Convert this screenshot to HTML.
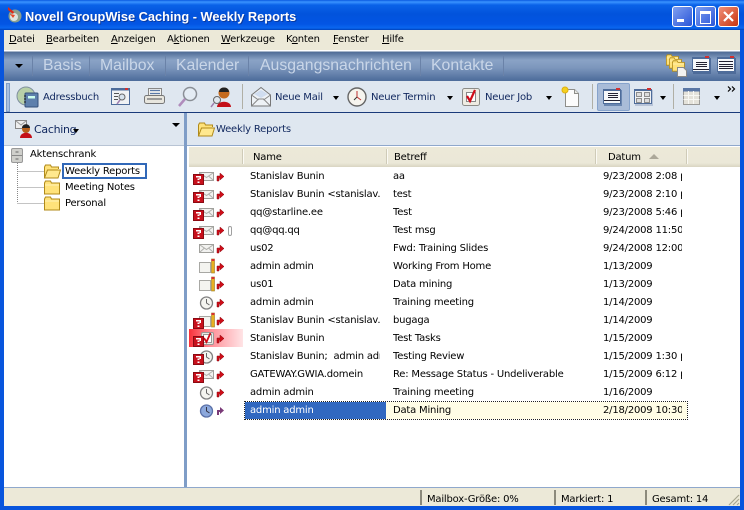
<!DOCTYPE html>
<html><head><meta charset="utf-8">
<style>
html,body{margin:0;padding:0;width:744px;height:510px;overflow:hidden;background:#0855DD}
body{position:relative;font-family:"DejaVu Sans","Liberation Sans",sans-serif;font-size:10px;color:#000;letter-spacing:-.2px}
.a{position:absolute}
.t{position:absolute;white-space:nowrap;line-height:14px}
.m{position:absolute;top:33px;white-space:nowrap;font-size:10px;line-height:14px}
.m u{text-decoration:underline}
.n{position:absolute;top:56px;font-family:"Liberation Sans",sans-serif;font-size:15.800px;line-height:20px;color:#C9D6E8;white-space:nowrap;letter-spacing:0}
.s{position:absolute;width:1px;background:#6A82A8}
.b{position:absolute;top:91px;color:#10275E;white-space:nowrap;line-height:14px;font-size:10px}
.dd{position:absolute;width:0;height:0;border-left:3.5px solid transparent;border-right:3.5px solid transparent;border-top:4px solid #000}
.c{position:absolute;white-space:nowrap;overflow:hidden;line-height:14px;height:15px;font-size:10px}
.n1{left:250px;width:130px}.n2{left:393px;width:198px}.n3{left:603px;width:79px}
svg{position:absolute;overflow:visible}
</style></head><body>
<svg width="0" height="0" style="position:absolute"><defs>
<g id="q"><rect x=".5" y=".5" width="10" height="10" fill="#C8101C" stroke="#8A0A12"/><rect x="3" y="2" width="5" height="1.500" fill="#fff"/><rect x="6.500" y="2" width="1.500" height="3" fill="#fff"/><rect x="4.500" y="4.500" width="2" height="1.500" fill="#fff"/><rect x="4.500" y="7.500" width="2" height="1.500" fill="#fff"/></g>
<g id="env"><rect x=".5" y=".5" width="14" height="8" fill="#F2F2F0" stroke="#A0A09C"/><path d="M1 1l6.500 4.500L14 1M1 8l4.500-4M14 8L9.500 4" fill="none" stroke="#B0B0AC"/></g>
<path id="ar" d="M1 9V4h3V1l4 3.500-4 3.500V6H3v3z" fill="#D00C18" stroke="#8A0A12" stroke-width=".5"/>
<g id="clk"><circle cx="7" cy="7" r="6" fill="#F4F4F0" stroke="#808080" stroke-width="1.300"/><path d="M7 3v4l3 2" fill="none" stroke="#666"/></g>
<g id="box"><rect x=".5" y="3.500" width="11" height="10" fill="#F4F4F0" stroke="#A8A8A4"/><rect x="12.500" y="0" width="3" height="14" fill="#E8B020" stroke="#9A7A20" stroke-width=".6"/><rect x="12.500" y="0" width="3" height="2" fill="#D83030"/></g>
<g id="fold"><path d="M.5 14V3l1-2h5l1 2h8v11z" fill="#FFE27A" stroke="#B08A1A"/><path d="M1 5h14" stroke="#FFF3B8"/></g>
<g id="foldo"><path d="M.5 14V3l1-2h5l1 2h7v2" fill="#FFE27A" stroke="#B08A1A"/><path d="M.5 14l3-8h13l-2.500 8z" fill="#FFE88E" stroke="#B08A1A"/></g>
</defs></svg>

<!-- titlebar -->
<div class="a" style="left:0;top:0;width:744px;height:30px;background:linear-gradient(#0A5AE0 0,#3A93FF 2px,#0A62E8 5px,#0253DC 14px,#0355E4 24px,#0A66F0 28px,#0040B8 30px)"></div>
<svg style="left:6px;top:6px" width="18" height="18"><circle cx="9" cy="10" r="6.500" fill="#8AA090"/><circle cx="8" cy="11" r="4" fill="#DDE4E0"/><path d="M2 1l6 5-1 2-5-4z" fill="#E02818"/><path d="M4 8l5 1-2 3z" fill="#E84828"/></svg>
<div class="t" style="left:25px;top:10px;color:#fff;font-family:'Liberation Sans',sans-serif;font-weight:bold;font-size:12.800px;letter-spacing:0;text-shadow:1px 1px 0 #0A3AA0">Novell GroupWise Caching - Weekly Reports</div>
<!-- window buttons -->
<div class="a" style="left:672px;top:6px;width:19px;height:19px;border:1px solid #fff;border-radius:3px;background:linear-gradient(135deg,#7FA0F0,#2A55D8)"><div class="a" style="left:4px;top:12px;width:7px;height:3px;background:#fff"></div></div>
<div class="a" style="left:695px;top:6px;width:19px;height:19px;border:1px solid #fff;border-radius:3px;background:linear-gradient(135deg,#7FA0F0,#2A55D8)"><div class="a" style="left:4px;top:4px;width:9px;height:9px;border:1px solid #fff;border-top:3px solid #fff"></div></div>
<div class="a" style="left:718px;top:6px;width:19px;height:19px;border:1px solid #fff;border-radius:3px;background:linear-gradient(135deg,#F09078,#C83410)"></div>
<svg style="left:719px;top:7px" width="19" height="19"><path d="M5 5l9 9M14 5l-9 9" stroke="#fff" stroke-width="2.200"/></svg>

<!-- menu -->
<div class="a" style="left:4px;top:30px;width:736px;height:20px;background:#ECE9D8"></div>
<div class="m" style="left:9px"><u>D</u>atei</div>
<div class="m" style="left:46px"><u>B</u>earbeiten</div>
<div class="m" style="left:111px"><u>A</u>nzeigen</div>
<div class="m" style="left:167px">A<u>k</u>tionen</div>
<div class="m" style="left:221px"><u>W</u>erkzeuge</div>
<div class="m" style="left:286px">K<u>o</u>nten</div>
<div class="m" style="left:333px"><u>F</u>enster</div>
<div class="m" style="left:382px"><u>H</u>ilfe</div>

<!-- nav -->
<div class="a" style="left:4px;top:50px;width:736px;height:31px;background:linear-gradient(#fff 0,#fff 1px,#4F6C96 2px,#8AA3C6 10px,#7C96BC 18px,#4F6E9C 30px)"></div>
<div class="a" style="left:15px;top:64px;width:0;height:0;border-left:4px solid transparent;border-right:4px solid transparent;border-top:4px solid #000"></div>
<div class="s" style="left:32px;top:56px;height:20px"></div>
<div class="n" style="left:43px">Basis</div><div class="s" style="left:89px;top:56px;height:20px"></div>
<div class="n" style="left:100px">Mailbox</div><div class="s" style="left:165px;top:56px;height:20px"></div>
<div class="n" style="left:176px">Kalender</div><div class="s" style="left:248px;top:56px;height:20px"></div>
<div class="n" style="left:260px">Ausgangsnachrichten</div><div class="s" style="left:420px;top:56px;height:20px"></div>
<div class="n" style="left:431px">Kontakte</div><div class="s" style="left:503px;top:56px;height:20px"></div>
<svg style="left:666px;top:54px" width="22" height="22"><use href="#fold" transform="scale(.8)"/><use href="#fold" transform="translate(3,3) scale(.8)"/><use href="#fold" transform="translate(6,6) scale(.8)"/><path d="M11.500 13.500h6l3 3v6h-9z" fill="#F2F2F0" stroke="#888"/></svg>
<svg style="left:692px;top:57px" width="19" height="17"><rect x="1" y="1" width="18" height="16" fill="#4E6C9A"/><rect x=".5" y=".5" width="17" height="14" fill="#F6F8FA" stroke="#4E6C9A"/><rect x="0" y="0" width="18" height="2" fill="#4E6C9A"/><path d="M4 5.500h11M4 7.500h11M4 9.500h11M1 12.500h16" stroke="#223"/><rect x="13" y="-1" width="4" height="2" fill="#D03030"/></svg>
<svg style="left:717px;top:57px" width="19" height="17"><rect x="1" y="1" width="18" height="16" fill="#4E6C9A"/><rect x=".5" y=".5" width="17" height="14" fill="#F6F8FA" stroke="#4E6C9A"/><rect x="0" y="0" width="18" height="2" fill="#4E6C9A"/><path d="M2 4.500h14M2 7.500h14M2 9.500h14M2 11.500h14" stroke="#223"/><rect x="13" y="-1" width="4" height="2" fill="#D03030"/></svg>

<!-- toolbar -->
<div class="a" style="left:4px;top:81px;width:736px;height:31px;background:#DFE7F0"></div>
<div class="a" style="left:6px;top:83px;width:2px;height:27px;background:#A9C0E0;border:.5px solid #7F9DC7"></div>
<svg style="left:16px;top:85px" width="24" height="24"><circle cx="10" cy="11" r="9" fill="#B8D0A8" stroke="#8090A0"/><rect x="9" y="8" width="13" height="14" rx="1" fill="#5E80AC" stroke="#34507A"/><rect x="12" y="11" width="7" height="2.500" fill="#CFE"/><path d="M8 11h2M8 14h2M8 17h2" stroke="#222"/></svg>
<div class="b" style="left:43px">Adressbuch</div>
<svg style="left:111px;top:87px" width="20" height="20"><rect x=".5" y="1.500" width="18" height="16" fill="#F0F2F4" stroke="#4E6C9A"/><rect x="0" y="1" width="19" height="2.500" fill="#4E6C9A"/><rect x="14" y="1" width="3" height="2" fill="#D03030"/><path d="M3 6.500h5M3 9.500h4M3 12.500h4" stroke="#555"/><circle cx="11" cy="10" r="3" fill="#D8E4EE" stroke="#666"/><path d="M9 13l-3 4" stroke="#A080B0" stroke-width="1.500"/></svg>
<svg style="left:144px;top:87px" width="22" height="20"><rect x="4.500" y="1.500" width="13" height="8" fill="#F2F2F0" stroke="#888"/><path d="M6 3.500h10M6 6.500h10" stroke="#5878A8" stroke-width="1.300"/><rect x=".5" y="8.500" width="20" height="8" rx="2" fill="#E8E6DE" stroke="#777"/><rect x="3" y="11" width="15" height="2" fill="#999"/></svg>
<svg style="left:177px;top:86px" width="22" height="22"><circle cx="13" cy="8" r="6.500" fill="#E4ECF4" stroke="#8A8F96" stroke-width="1.500"/><path d="M8 13l-6 7" stroke="#B08CBC" stroke-width="2.500"/></svg>
<svg style="left:209px;top:86px" width="24" height="22"><circle cx="15" cy="7" r="5.500" fill="#C46A1E"/><path d="M10 6c0-6 10-6 10 0z" fill="#222"/><path d="M8 21c0-7 14-7 14 0z" fill="#C41018"/><circle cx="8" cy="14" r="3.500" fill="#E0E8F0" stroke="#666"/><path d="M5 17l-3 4" stroke="#A080B0" stroke-width="1.500"/></svg>
<div class="a" style="left:242px;top:84px;width:1px;height:25px;background:#B0AFA5"></div>
<svg style="left:251px;top:87px" width="22" height="20"><path d="M.5 8L10 .5 19.500 8v11H.5z" fill="#EEF2F6" stroke="#777"/><path d="M3 7l7-4 7 4-7 4z" fill="#D0DDF0"/><path d="M.5 19l7-7h5l7 7M.5 8l7 5M19.500 8l-7 5" fill="none" stroke="#888"/></svg>
<div class="b" style="left:275px">Neue Mail</div>
<div class="dd" style="left:333px;top:96px"></div>
<svg style="left:347px;top:87px" width="20" height="20"><circle cx="10" cy="10" r="9" fill="#F6F4EE" stroke="#666" stroke-width="1.400"/><path d="M10 4v6l4 3" fill="none" stroke="#C03030"/><path d="M10 10l-3 3" stroke="#333"/></svg>
<div class="b" style="left:371px">Neuer Termin</div>
<div class="dd" style="left:447px;top:96px"></div>
<svg style="left:462px;top:88px" width="19" height="19"><rect x=".5" y=".5" width="17" height="17" rx="2" fill="#EEECE4" stroke="#8C8C88"/><rect x="4.500" y="4.500" width="9" height="9" fill="#fff" stroke="#888"/><path d="M5 8l3 5 5-11" fill="none" stroke="#D00C18" stroke-width="2.200"/></svg>
<div class="b" style="left:485px">Neuer Job</div>
<div class="dd" style="left:546px;top:96px"></div>
<svg style="left:560px;top:85px" width="22" height="23"><path d="M5.500 4.500h9l4 4v13h-13z" fill="#FCFCFC" stroke="#8E8E8A"/><path d="M14.500 4.500v4h4" fill="#E8E8E4" stroke="#8E8E8A"/><circle cx="5" cy="5" r="3" fill="#F4D020" stroke="#E0B010"/></svg>
<div class="a" style="left:592px;top:84px;width:1px;height:25px;background:#B0AFA5"></div>
<div class="a" style="left:597px;top:83px;width:31px;height:26px;background:#A9BCD8;border:1px solid #86A3CC;border-radius:2px"></div>
<svg style="left:603px;top:89px" width="19" height="17"><rect x="1" y="1" width="18" height="16" fill="#6A86B0"/><rect x=".5" y=".5" width="17" height="14" fill="#F6F8FA" stroke="#4E6C9A"/><rect x="0" y="0" width="18" height="2" fill="#4E6C9A"/><path d="M5 4.500h10M5 6.500h10M5 8.500h10M1 11.500h16" stroke="#223"/><rect x="13" y="-1" width="4" height="2" fill="#D03030"/></svg>
<svg style="left:634px;top:89px" width="19" height="17"><rect x="1" y="1" width="18" height="16" fill="#B8C4D8"/><rect x=".5" y=".5" width="17" height="14" fill="#F0F2F4" stroke="#4E6C9A"/><rect x="0" y="0" width="18" height="2" fill="#4E6C9A"/><rect x="2.500" y="3.500" width="5" height="4" fill="#DDD" stroke="#666" stroke-width=".7"/><rect x="10.500" y="3.500" width="5" height="4" fill="#DDD" stroke="#666" stroke-width=".7"/><rect x="2.500" y="9.500" width="5" height="4" fill="#DDD" stroke="#666" stroke-width=".7"/><rect x="10.500" y="9.500" width="5" height="4" fill="#DDD" stroke="#666" stroke-width=".7"/><rect x="13" y="-1" width="4" height="2" fill="#D03030"/></svg>
<div class="dd" style="left:660px;top:96px"></div>
<div class="a" style="left:673px;top:84px;width:1px;height:25px;background:#B0AFA5"></div>
<svg style="left:683px;top:88px" width="19" height="18"><rect x=".5" y=".5" width="16" height="16" fill="#E4E2DA" stroke="#9A9A98"/><rect x="0" y="0" width="17" height="3.500" fill="#5A76A4"/><path d="M.5 7.500h16M.5 11.500h16M5.500 3v13M10.500 3v13" stroke="#F8F8F4"/></svg>
<div class="dd" style="left:714px;top:96px"></div>
<svg style="left:727px;top:86px" width="10" height="6"><path d="M1 .5l2.500 2.500L1 5.500M5 .5l2.500 2.500L5 5.500" fill="none" stroke="#000" stroke-width="1.200"/></svg>
<div class="a" style="left:4px;top:112px;width:736px;height:1px;background:#1A3A7A"></div>

<!-- left pane -->
<div class="a" style="left:4px;top:113px;width:180px;height:32px;background:#DFE7F0"></div>
<svg style="left:15px;top:120px" width="20" height="20"><rect x=".5" y=".5" width="11" height="8" fill="#EEE" stroke="#888"/><path d="M1 1l5 4 5-4" fill="none" stroke="#999"/><circle cx="11" cy="9" r="4" fill="#B8601A"/><path d="M7 8c0-5 8-5 8 0z" fill="#222"/><path d="M5 18c0-7 12-7 12 0z" fill="#C41018"/></svg>
<div class="t" style="left:34px;top:123px;color:#10275E;font-size:11px;letter-spacing:-.3px">Caching</div>
<div class="dd" style="left:73px;top:129px"></div>
<div class="a" style="left:172px;top:123px;width:0;height:0;border-left:4px solid transparent;border-right:4px solid transparent;border-top:4.500px solid #000"></div>
<div class="a" style="left:4px;top:145px;width:180px;height:342px;background:#fff"></div>
<div class="a" style="left:4px;top:145px;width:180px;height:1px;background:#B8C4D4"></div>
<svg style="left:11px;top:148px" width="14" height="16"><rect x=".5" y=".5" width="11" height="14" rx="1.500" fill="#CFCFCB" stroke="#999"/><path d="M1 7.500h10" stroke="#888"/><path d="M4.500 4h3M4.500 11h3" stroke="#666"/></svg>
<div class="t" style="left:30px;top:148px">Aktenschrank</div>
<svg style="left:17px;top:163px" width="28" height="42"><path d="M.5 0v40M.5 8.500H27M.5 24.500H27M.5 40.500H27" stroke="#888" stroke-dasharray="1 1" fill="none"/></svg>
<svg style="left:44px;top:164px" width="17" height="15"><use href="#foldo"/></svg>
<div class="a" style="left:62px;top:163px;width:81px;height:12px;border:2px solid #3168B8"></div>
<div class="t" style="left:65px;top:165px">Weekly Reports</div>
<svg style="left:44px;top:180px" width="17" height="15"><use href="#fold"/></svg>
<div class="t" style="left:65px;top:181px">Meeting Notes</div>
<svg style="left:44px;top:196px" width="17" height="15"><use href="#fold"/></svg>
<div class="t" style="left:65px;top:197px">Personal</div>

<!-- splitter -->
<div class="a" style="left:184px;top:113px;width:3px;height:374px;background:#7F9DC7"></div>

<!-- right header -->
<div class="a" style="left:187px;top:113px;width:553px;height:32px;background:#DFE7F0"></div>
<svg style="left:198px;top:122px" width="17" height="15"><use href="#foldo"/></svg>
<div class="t" style="left:216px;top:123px;color:#10275E">Weekly Reports</div>
<div class="a" style="left:187px;top:145px;width:553px;height:1px;background:#8FA8CC"></div>
<div class="a" style="left:187px;top:146px;width:553px;height:341px;background:#fff"></div>
<div class="a" style="left:189px;top:147px;width:551px;height:20px;background:linear-gradient(#ECE9D8 0,#EBE8D8 16px,#D9D5C2 20px)"></div>
<div class="a" style="left:242px;top:149px;width:1px;height:15px;background:#FBFAF4;border-left:1px solid #CFCBB8"></div>
<div class="a" style="left:386px;top:149px;width:1px;height:15px;background:#FBFAF4;border-left:1px solid #CFCBB8"></div>
<div class="a" style="left:595px;top:149px;width:1px;height:15px;background:#FBFAF4;border-left:1px solid #CFCBB8"></div>
<div class="a" style="left:686px;top:149px;width:1px;height:15px;background:#FBFAF4;border-left:1px solid #CFCBB8"></div>
<div class="t" style="left:253px;top:151px">Name</div>
<div class="t" style="left:394px;top:151px">Betreff</div>
<div class="t" style="left:608px;top:151px">Datum</div>
<div class="a" style="left:649px;top:154px;width:0;height:0;border-left:5px solid transparent;border-right:5px solid transparent;border-bottom:5px solid #ACA899"></div>

<!-- rows -->
<div class="a" style="left:189px;top:329px;width:54px;height:18px;background:linear-gradient(90deg,#F8303A,#FF9098 40%,#FFE4E6)"></div>
<div class="a" style="left:245px;top:402px;width:141px;height:17px;background:#3168C0"></div>
<div class="a" style="left:386px;top:402px;width:301px;height:17px;background:#FFFDE6"></div>
<div class="a" style="left:244px;top:401px;box-sizing:border-box;width:444px;height:19px;border:1px dotted #222"></div>

<!-- row icons -->
<svg style="left:193px;top:168px" width="50" height="250">
<use href="#env" x="6" y="4"/><use href="#q" x="0" y="6"/><use href="#ar" x="23" y="4"/>
<use href="#env" x="6" y="22"/><use href="#q" x="0" y="24"/><use href="#ar" x="23" y="22"/>
<use href="#env" x="6" y="40"/><use href="#q" x="0" y="42"/><use href="#ar" x="23" y="40"/>
<use href="#env" x="6" y="58"/><use href="#q" x="0" y="60"/><use href="#ar" x="23" y="58"/>
<path d="M35.500 66v-6a1.500 1.500 0 0 1 3 0v6a1.500 1.500 0 0 1-3 0" fill="none" stroke="#A0A0A0"/>
<use href="#env" x="6" y="76"/><use href="#ar" x="23" y="76"/>
<use href="#box" x="6" y="91"/><use href="#ar" x="23" y="94"/>
<use href="#box" x="6" y="109"/><use href="#ar" x="23" y="112"/>
<use href="#clk" x="6.500" y="128"/><use href="#ar" x="23" y="130"/>
<use href="#box" x="6" y="145"/><use href="#q" x="0" y="150"/><use href="#ar" x="23" y="148"/>
<rect x="8.500" y="164.500" width="12" height="12" rx="1.500" fill="#ECEAE2" stroke="#999"/><rect x="10.500" y="166.500" width="8" height="8" fill="#fff" stroke="#999"/><path d="M11 170l2.500 4 4-9" fill="none" stroke="#D00C18" stroke-width="1.800"/><use href="#q" x="0" y="168"/><use href="#ar" x="23" y="166"/>
<use href="#clk" x="6.500" y="182"/><use href="#q" x="0" y="186"/><use href="#ar" x="23" y="184"/>
<use href="#env" x="6" y="202"/><use href="#q" x="0" y="204"/><use href="#ar" x="23" y="202"/>
<use href="#clk" x="6.500" y="218"/><use href="#ar" x="23" y="220"/>
<circle cx="13.500" cy="243" r="6" fill="#8CA8DC" stroke="#5A70A8" stroke-width="1.300"/><path d="M13.500 239v4l3 2" fill="none" stroke="#334"/><path d="M24 247v-5h3v-3l4 3.500-4 3.500v-2h-1v3z" fill="#7A3A78"/>
</svg>

<div class="c n1" style="top:170px">Stanislav Bunin</div><div class="c n2" style="top:170px">aa</div><div class="c n3" style="top:170px">9/23/2008 2:08 pm</div>
<div class="c n1" style="top:188px">Stanislav Bunin &lt;stanislav.bunin</div><div class="c n2" style="top:188px">test</div><div class="c n3" style="top:188px">9/23/2008 2:10 pm</div>
<div class="c n1" style="top:206px">qq@starline.ee</div><div class="c n2" style="top:206px">Test</div><div class="c n3" style="top:206px">9/23/2008 5:46 pm</div>
<div class="c n1" style="top:224px">qq@qq.qq</div><div class="c n2" style="top:224px">Test msg</div><div class="c n3" style="top:224px">9/24/2008 11:50 am</div>
<div class="c n1" style="top:242px">us02</div><div class="c n2" style="top:242px">Fwd: Training Slides</div><div class="c n3" style="top:242px">9/24/2008 12:00 pm</div>
<div class="c n1" style="top:260px">admin admin</div><div class="c n2" style="top:260px">Working From Home</div><div class="c n3" style="top:260px">1/13/2009</div>
<div class="c n1" style="top:278px">us01</div><div class="c n2" style="top:278px">Data mining</div><div class="c n3" style="top:278px">1/13/2009</div>
<div class="c n1" style="top:296px">admin admin</div><div class="c n2" style="top:296px">Training meeting</div><div class="c n3" style="top:296px">1/14/2009</div>
<div class="c n1" style="top:314px">Stanislav Bunin &lt;stanislav.bunin</div><div class="c n2" style="top:314px">bugaga</div><div class="c n3" style="top:314px">1/14/2009</div>
<div class="c n1" style="top:332px">Stanislav Bunin</div><div class="c n2" style="top:332px">Test Tasks</div><div class="c n3" style="top:332px">1/15/2009</div>
<div class="c n1" style="top:350px">Stanislav Bunin;&nbsp; admin admin</div><div class="c n2" style="top:350px">Testing Review</div><div class="c n3" style="top:350px">1/15/2009 1:30 pm</div>
<div class="c n1" style="top:368px">GATEWAY.GWIA.domein</div><div class="c n2" style="top:368px">Re: Message Status - Undeliverable</div><div class="c n3" style="top:368px">1/15/2009 6:12 pm</div>
<div class="c n1" style="top:386px">admin admin</div><div class="c n2" style="top:386px">Training meeting</div><div class="c n3" style="top:386px">1/16/2009</div>
<div class="c n1" style="top:404px;color:#fff">admin admin</div><div class="c n2" style="top:404px">Data Mining</div><div class="c n3" style="top:404px">2/18/2009 10:30 am</div>

<!-- status -->
<div class="a" style="left:4px;top:487px;width:736px;height:19px;background:#ECE9D8;border-top:1px solid #8FA8CC;box-sizing:border-box"></div>
<div class="a" style="left:420px;top:490px;width:2px;height:15px;background:#8C8A7C"></div>
<div class="a" style="left:554px;top:490px;width:2px;height:15px;background:#8C8A7C"></div>
<div class="a" style="left:645px;top:490px;width:2px;height:15px;background:#8C8A7C"></div>
<div class="t" style="left:427px;top:493px">Mailbox-Größe: 0%</div>
<div class="t" style="left:561px;top:493px">Markiert: 1</div>
<div class="t" style="left:652px;top:493px">Gesamt: 14</div>
<svg style="left:728px;top:492px" width="12" height="14"><path d="M11 3L1 13M11 7l-6 6M11 11l-2 2" stroke="#A8A690" stroke-width="1.200"/></svg>
</body></html>
